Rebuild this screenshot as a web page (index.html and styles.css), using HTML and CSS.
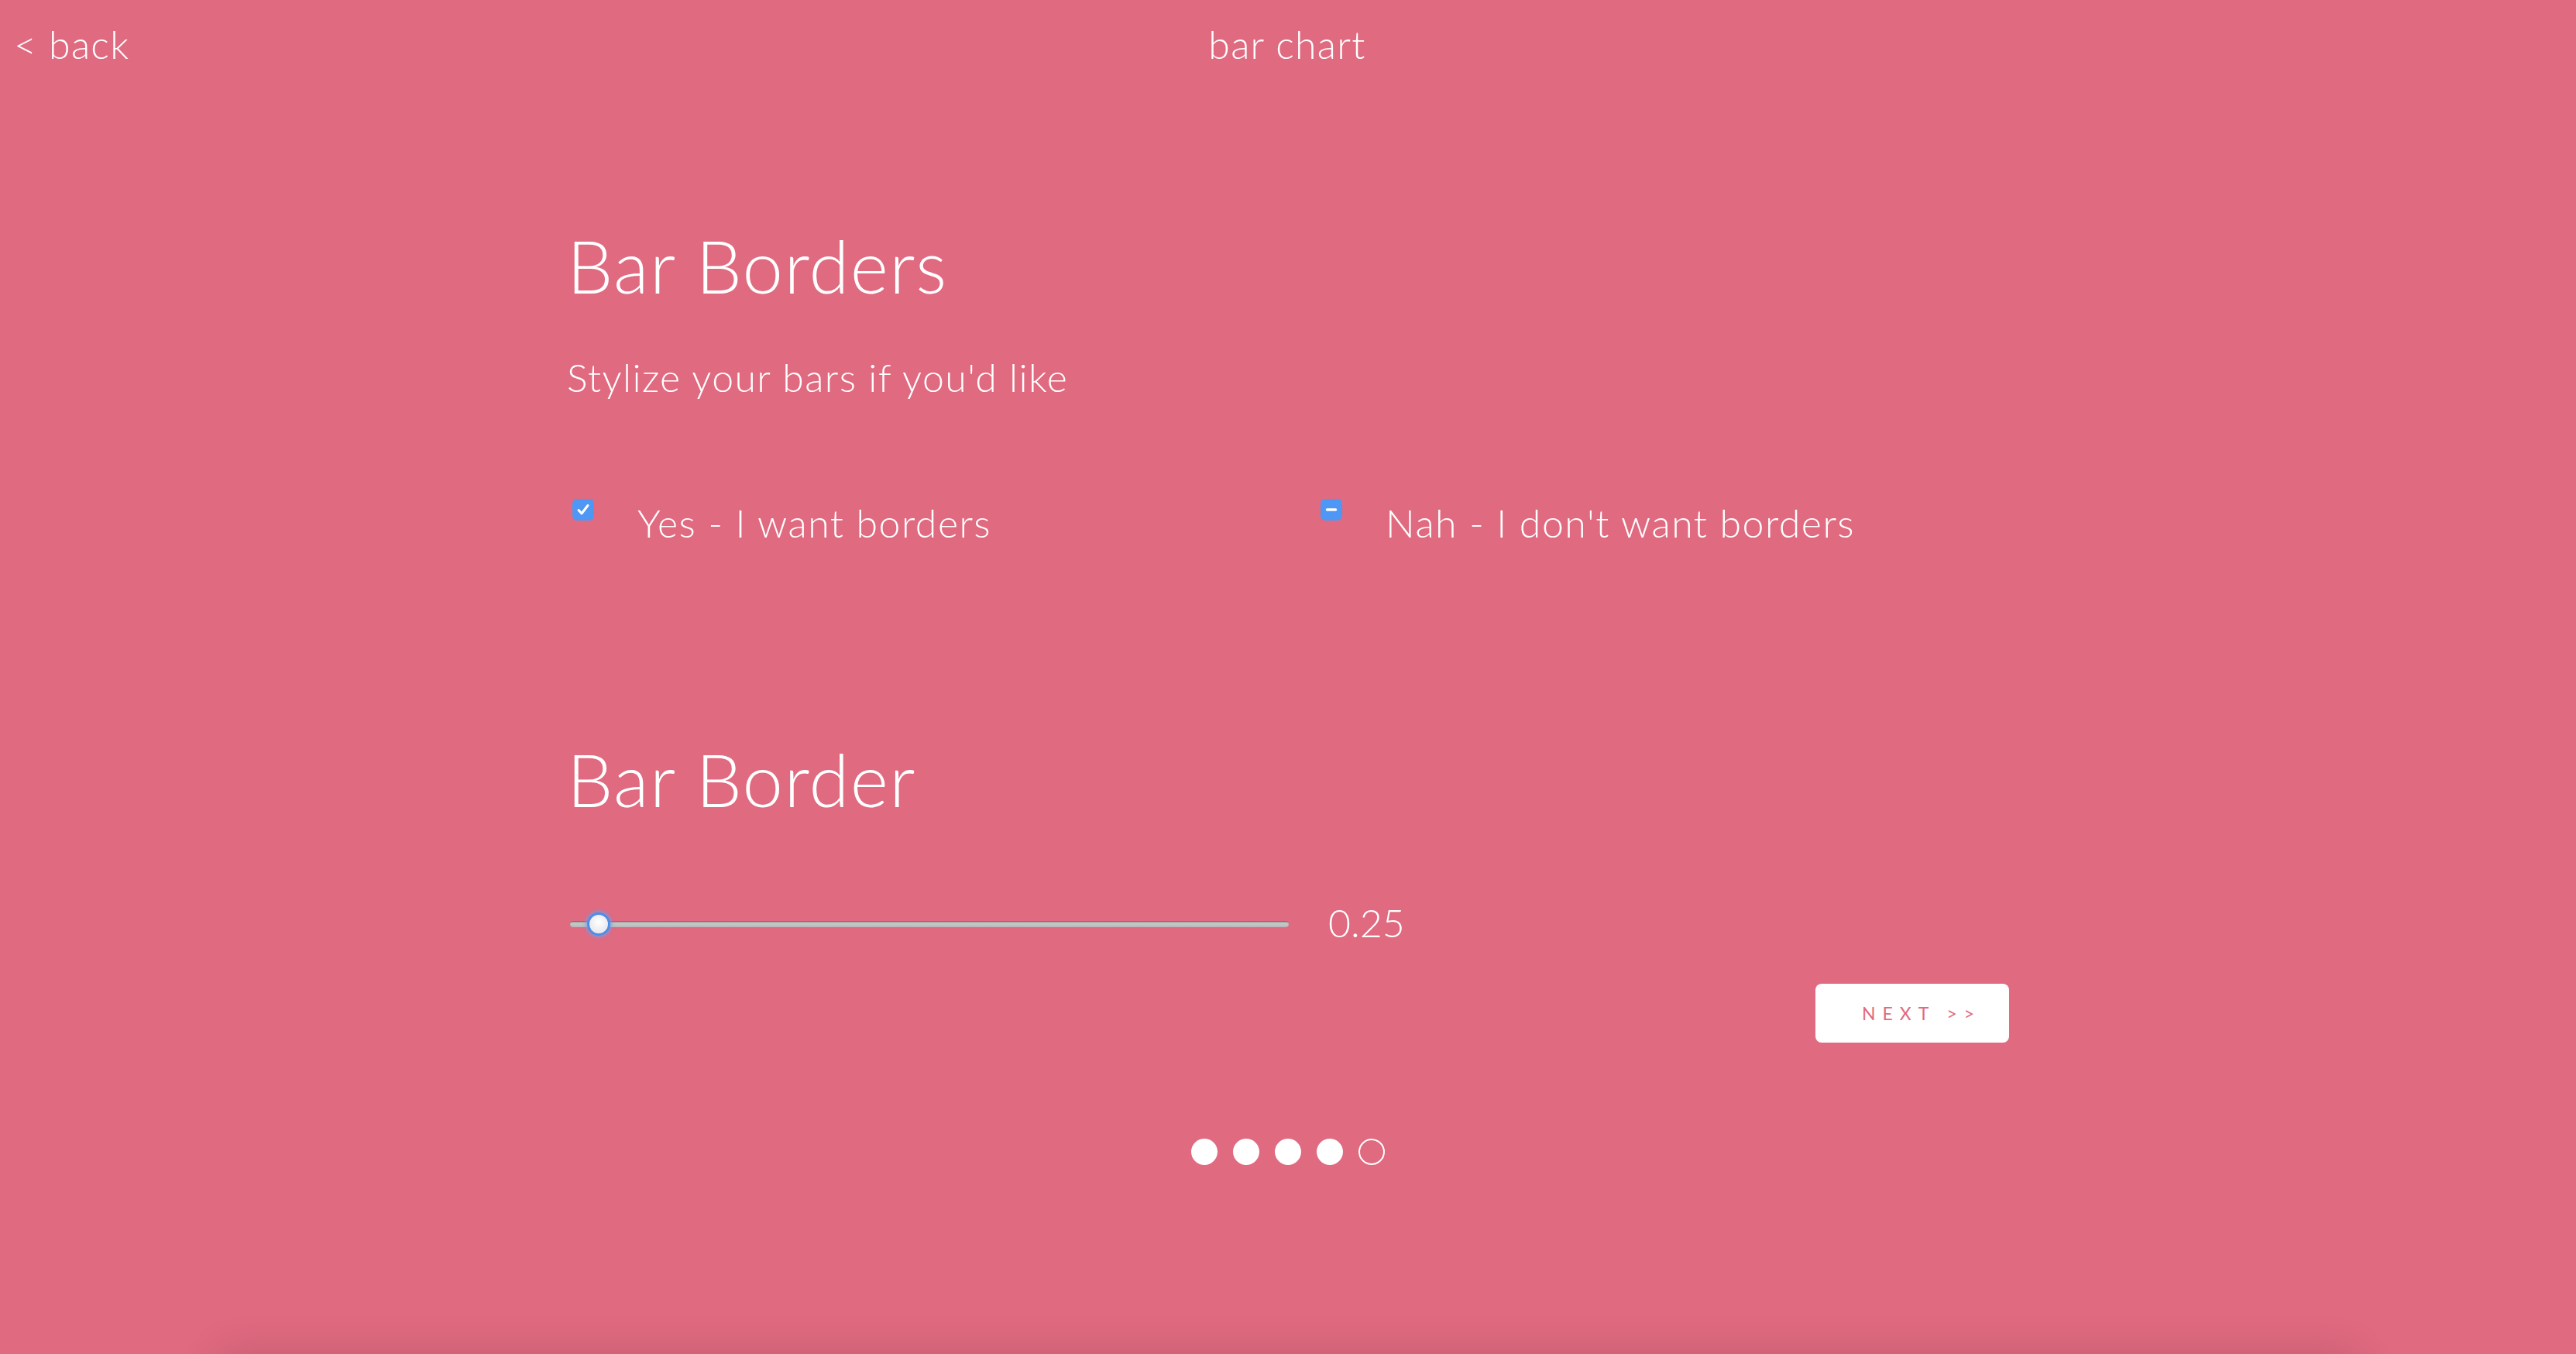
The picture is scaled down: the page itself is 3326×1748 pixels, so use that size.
FILE: index.html
```html
<!DOCTYPE html>
<html lang="en">
<head>
<meta charset="utf-8">
<title>bar chart</title>
<link rel="stylesheet" href="styles.css">
</head>
<body>
<div class="page">
  <header class="topbar">
    <a class="back" href="#">&lt; back</a>
    <div class="app-title">bar chart</div>
    <div class="spacer"></div>
  </header>

  <main class="wizard">
    <h1 class="step-title">Bar Borders</h1>
    <p class="step-sub">Stylize your bars if you'd like</p>

    <div class="options">
      <label class="option">
        <span class="box">
          <svg viewBox="0 0 28 28" width="28" height="28"><path d="M8 14.5 L12 19 L20 8.5" fill="none" stroke="#fff" stroke-width="3" stroke-linecap="round" stroke-linejoin="round"/></svg>
        </span>
        <span class="option-text">Yes - I want borders</span>
      </label>
      <label class="option">
        <span class="box">
          <svg viewBox="0 0 28 28" width="28" height="28"><path d="M8.5 14 L19.5 14" fill="none" stroke="#fff" stroke-width="3.5" stroke-linecap="round"/></svg>
        </span>
        <span class="option-text">Nah - I don't want borders</span>
      </label>
    </div>

    <h2 class="step-title second">Bar Border</h2>

    <div class="slider-row">
      <input class="slider" type="range" min="0" max="10" step="0.25" value="0.25">
      <span class="slider-value">0.25</span>
    </div>

    <button class="next" type="button">NEXT &gt;&gt;</button>

    <div class="dots">
      <span class="dot"></span>
      <span class="dot"></span>
      <span class="dot"></span>
      <span class="dot"></span>
      <span class="dot empty"></span>
    </div>
  </main>
</div>
<section class="preview"></section>
</body>
</html>
```
FILE: styles.css
```css
* { box-sizing: border-box; }

html, body {
  margin: 0;
  padding: 0;
  background: #e06a80;
}

body {
  font-family: Lato, "Open Sans", sans-serif;
  font-weight: 300;
  letter-spacing: 0.02em;
  color: #fff;
}

.page {
  height: 1748px;
  display: flex;
  flex-direction: column;
}

.topbar {
  display: grid;
  grid-template-columns: 1fr auto 1fr;
  padding: 32px 20px 0 18px;
  font-size: 50px;
  letter-spacing: 0.025em;
  line-height: 1;
}

.back {
  color: #fff;
  text-decoration: none;
}

.app-title { text-align: center; }

.wizard {
  width: 1862px;
  margin: 0 auto;
  display: flex;
  flex-direction: column;
}

.step-title {
  margin: 214px 0 0;
  font-size: 94px;
  font-weight: 300;
  letter-spacing: 0.015em;
  line-height: 1;
}

.step-title.second {
  margin-top: 259px;
}

.step-sub {
  margin: 72px 0 0;
  font-size: 50px;
  letter-spacing: 0.028em;
  line-height: 1;
}

.options {
  margin-top: 132px;
  display: grid;
  grid-template-columns: 966px 1fr;
}

.option {
  display: flex;
  align-items: flex-start;
  gap: 56px;
  padding-left: 7px;
}

.box {
  width: 28px;
  height: 28px;
  border-radius: 6px;
  background: #4f97f5;
  display: block;
  flex: none;
}

.box svg { display: block; }

.option-text {
  margin-top: 6px;
  font-size: 50px;
  letter-spacing: 0.03em;
  line-height: 1;
}

.slider-row {
  margin-top: 113px;
  display: flex;
  align-items: center;
  gap: 51px;
  height: 50px;
}

.slider {
  -webkit-appearance: none;
  appearance: none;
  width: 928px;
  height: 32px;
  margin: 4px 0 0 4px;
  background: transparent;
}

.slider::-webkit-slider-runnable-track {
  height: 8px;
  border-radius: 4px;
  background: linear-gradient(#8f8f8f, #c9c9c9 40%, #b8b8b8);
  box-shadow: inset 0 1px 1px rgba(0,0,0,0.25);
}

.slider::-webkit-slider-thumb {
  -webkit-appearance: none;
  width: 30px;
  height: 30px;
  margin-top: -11px;
  border-radius: 50%;
  background: radial-gradient(circle at 50% 40%, #ffffff, #e9e9ee 70%);
  border: 3px solid #4d8fe6;
  box-shadow: 0 0 4px 2px rgba(110,160,240,0.75);
}

.slider-value {
  font-size: 50px;
  letter-spacing: 0;
  line-height: 1;
}

.next {
  align-self: flex-end;
  margin-top: 54px;
  width: 250px;
  height: 76px;
  border: 0;
  border-radius: 8px;
  background: #fff;
  color: #e06a80;
  font-family: Lato, sans-serif;
  font-weight: 400;
  font-size: 23px;
  letter-spacing: 9px;
  padding: 0 0 0 24px;
}

.dots {
  margin-top: 124px;
  display: flex;
  justify-content: center;
  gap: 20px;
}

.dot {
  width: 34px;
  height: 34px;
  border-radius: 50%;
  background: #fff;
}

.dot.empty {
  background: transparent;
  border: 2px solid #fff;
}

.preview {
  width: 2760px;
  height: 600px;
  margin: 0 auto;
  background: #e06a80;
  box-shadow: 0 0 50px rgba(0,0,0,0.14);
}
```
